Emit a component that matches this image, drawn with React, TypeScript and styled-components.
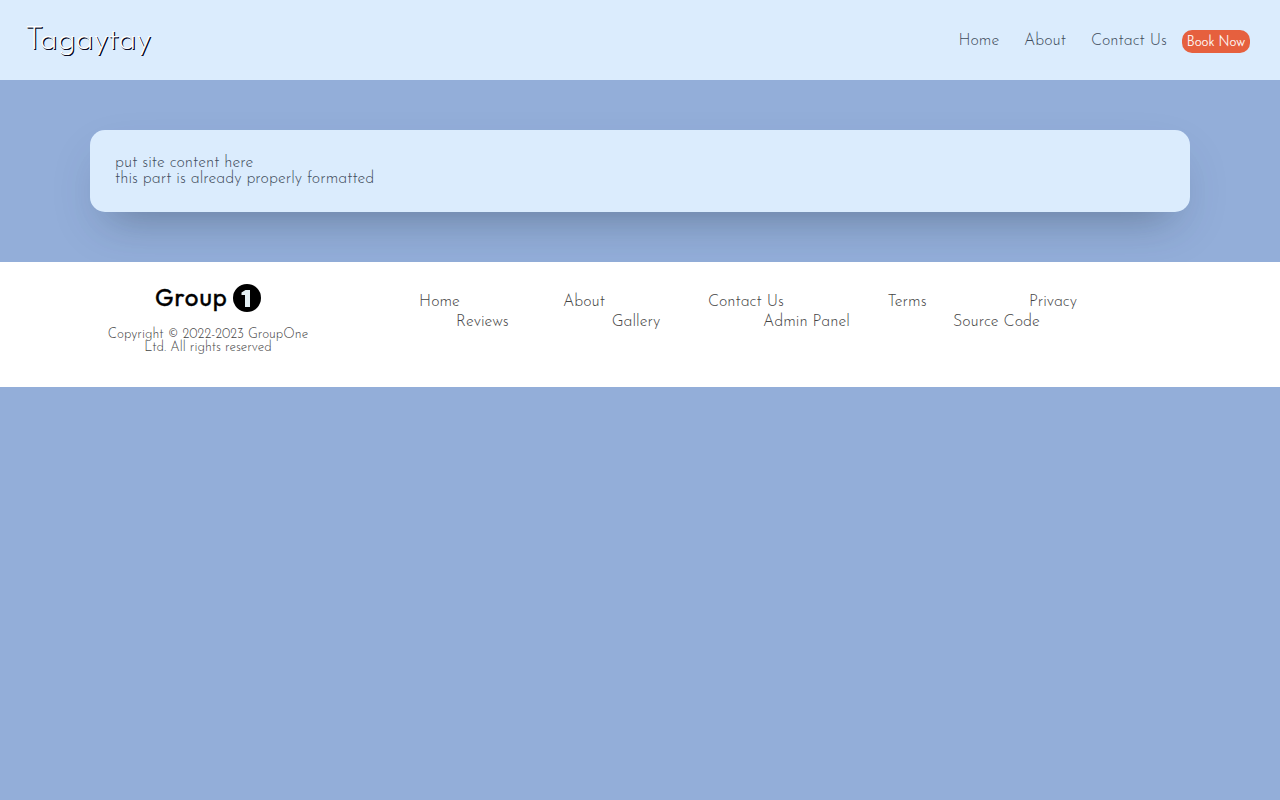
import React from "react";
import styled, { createGlobalStyle } from "styled-components";

const GlobalStyle = createGlobalStyle`
  * { box-sizing: border-box; }
  body {
    margin: 0;
    background: #93aed9;
    color: #3f4c5c;
    font-family: "Josefin Sans", Lato, "Open Sans", sans-serif;
    font-weight: 300;
    font-size: 16px;
    line-height: 16px;
  }
`;

const Header = styled.header`
  display: flex;
  justify-content: space-between;
  height: 80px;
  padding: 0 30px 0 25px;
  background: #dbecfd;
`;

const Brand = styled.a`
  padding-top: 25px;
  font-size: 32px;
  line-height: 32px;
  color: #fff;
  white-space: nowrap;
  text-shadow: 1px 1px 0 #060a24, 1px 1px 0 #060a24;
`;

const Nav = styled.nav`
  display: flex;
  padding-top: 31px;
`;

const Link = styled.a<{ $w: number; $gap?: number }>`
  width: ${(p) => p.$w}px;
  margin-right: ${(p) => p.$gap ?? 0}px;
  line-height: 20px;
  white-space: nowrap;
`;

const BookButton = styled.button`
  width: 68px;
  height: 23px;
  margin-top: -1px;
  padding: 1px 0 0;
  border: 0;
  border-radius: 10px;
  background: #e6603e;
  color: #fff;
  font-family: inherit;
  font-size: 13.333px;
  font-weight: 300;
  line-height: 23px;
  white-space: nowrap;
  -webkit-text-stroke: 0.2px #fff;
`;

const Content = styled.main`
  padding: 50px 90px;
`;

const Card = styled.section`
  height: 82px;
  padding: 25px;
  border-radius: 15px;
  background: #dbecfd;
  box-shadow: 0 20px 50px -5px rgba(40, 60, 93, 0.11), 0 24px 40px -24px rgba(0, 0, 0, 0.28);
`;

const Line = styled.p`
  width: max-content;
  margin: 0;
`;

const Footer = styled.footer`
  position: relative;
  display: flex;
  height: 125px;
  background: #fff;
  color: #444;
`;

const Company = styled.div`
  display: flex;
  flex-direction: column;
  align-items: center;
  width: 416px;
  padding-top: 21px;
`;

const Logo = styled.div`
  display: flex;
  align-items: center;
  justify-content: space-between;
  width: 106px;
  height: 30px;
  margin-bottom: 15px;
  color: #000;
`;

const LogoText = styled.span`
  padding-bottom: 2px;
  font-family: Outfit, Urbanist, Lato, sans-serif;
  font-size: 24px;
  font-weight: 400;
  letter-spacing: 1px;
  -webkit-text-stroke: 0.4px #000;
`;

const Copyright = styled(Line)`
  font-size: 13.333px;
  line-height: 13px;
`;

const Links = styled.div`
  display: flex;
  flex-direction: column;
  width: 664px;
  padding-top: 30px;
`;

const LinkRow = styled.div`
  display: flex;
  justify-content: center;
  gap: 103.5px;
`;

export default function App() {
  return (
    <>
      <GlobalStyle />
      <Header>
        <Brand>Tagaytay</Brand>
        <Nav>
          <Link $w={40.5} $gap={25}>Home</Link>
          <Link $w={42} $gap={25}>About</Link>
          <Link $w={76} $gap={15}>Contact Us</Link>
          <BookButton>Book Now</BookButton>
        </Nav>
      </Header>
      <Content>
        <Card>
          <Line>put site content here</Line>
          <Line>this part is already properly formatted</Line>
        </Card>
      </Content>
      <Footer>
        <Company>
          <Logo>
            <LogoText>Group</LogoText>
            <svg width="28" height="28" viewBox="0 0 28 28">
              <circle cx="14" cy="14" r="14" fill="#000" />
              <path d="M8.5 8.5L12.5 6H17v17h-5V11H8.5z" fill="#e4f0f4" />
            </svg>
          </Logo>
          <Copyright>Copyright © 2022-2023 GroupOne</Copyright>
          <Copyright>Ltd. All rights reserved</Copyright>
        </Company>
        <Links>
          <LinkRow>
            <Link $w={40.4}>Home</Link>
            <Link $w={41.4}>About</Link>
            <Link $w={76}>Contact Us</Link>
            <Link $w={38}>Terms</Link>
            <Link $w={48}>Privacy</Link>
          </LinkRow>
          <LinkRow>
            <Link $w={52.2}>Reviews</Link>
            <Link $w={47.8}>Gallery</Link>
            <Link $w={86.5}>Admin Panel</Link>
            <Link $w={87}>Source Code</Link>
          </LinkRow>
        </Links>
      </Footer>
    </>
  );
}
